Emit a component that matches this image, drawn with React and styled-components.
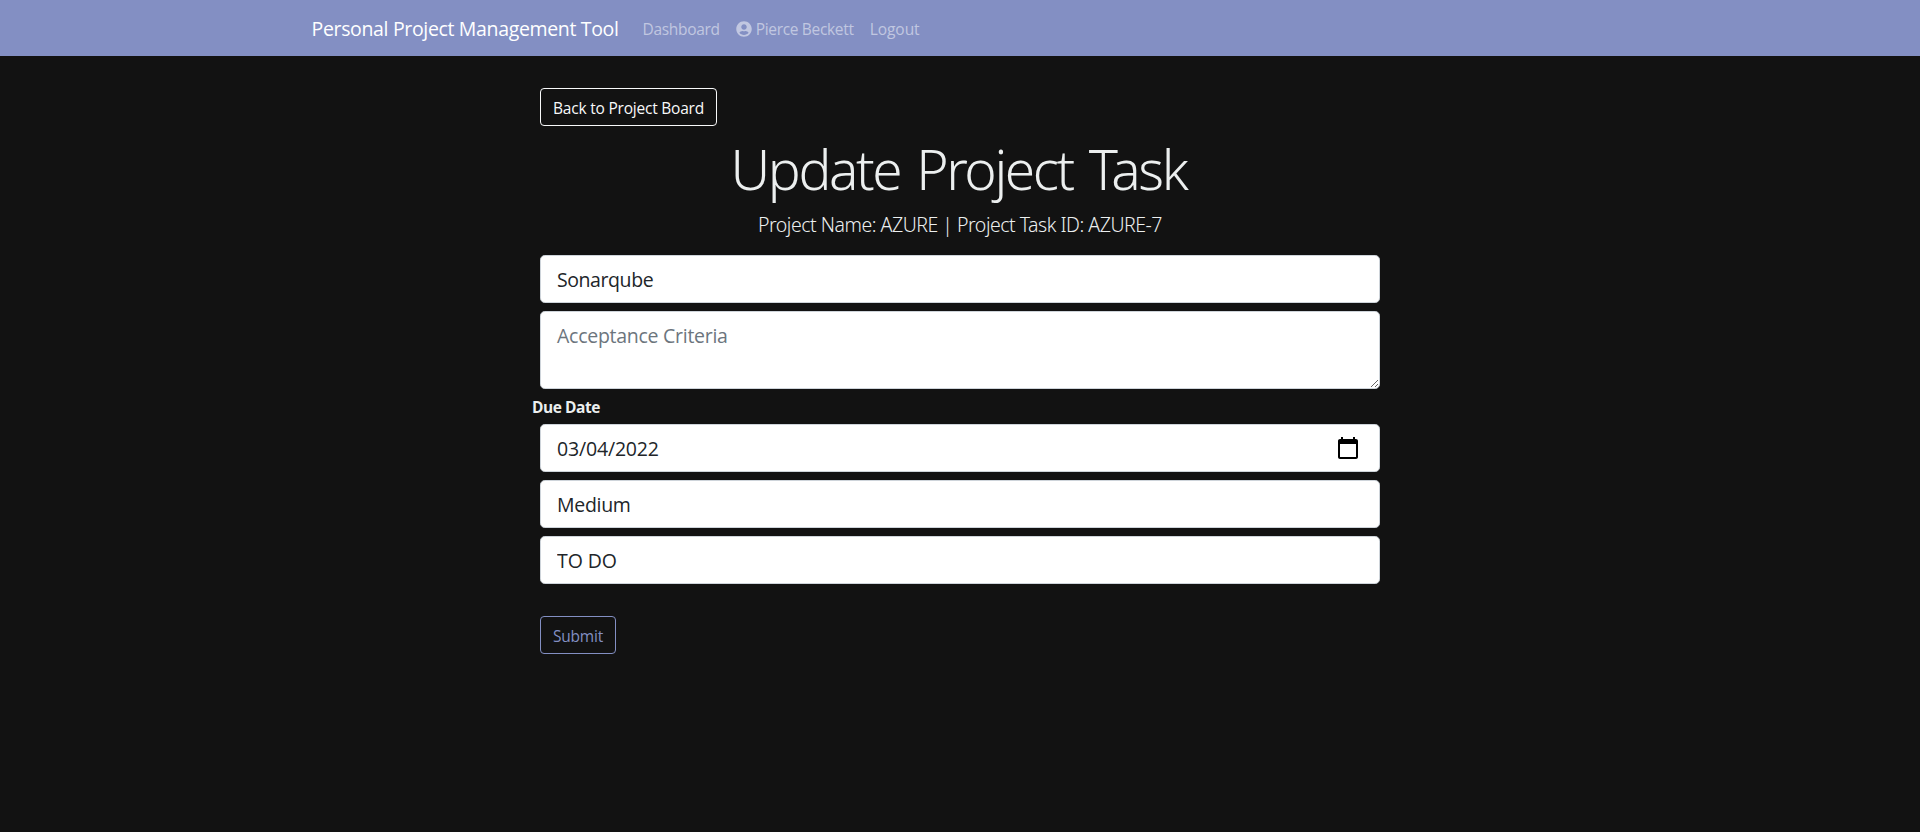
import React from "react";
import styled, { createGlobalStyle, css } from "styled-components";

const GlobalStyle = createGlobalStyle`
  *, *::before, *::after { box-sizing: border-box; }
  body {
    margin: 0;
    min-height: 100vh;
    background: #121212;
    color: #ecefef;
    font-family: "Open Sans", "Noto Sans", sans-serif;
    font-size: 15.5px;
    line-height: 24px;
    letter-spacing: -0.21px;
  }
`;

const Navbar = styled.nav`
  display: flex;
  align-items: center;
  height: 56px;
  padding-left: 311.5px;
  background: #838fc3;
`;

const Brand = styled.a`
  margin-right: 16px;
  padding-top: 2px;
  color: #fff;
  font-size: 19.5px;
  line-height: 30px;
  letter-spacing: -0.34px;
  white-space: nowrap;
`;

const NavLinks = styled.div`
  display: flex;
  align-items: center;
`;

const NavLink = styled.a`
  display: flex;
  align-items: center;
  gap: 4px;
  padding: 9px 8px 7px;
  color: rgba(255, 255, 255, 0.5);
  white-space: nowrap;
  letter-spacing: ${({ $tracking }) => $tracking || "-0.32px"};
`;

const UserGlyph = styled.svg`
  width: 16px;
  height: 16px;
  margin-bottom: 1px;
  fill: currentColor;
`;

const Main = styled.main`
  display: flex;
  flex-direction: column;
  align-items: flex-start;
  width: 840px;
  margin: 0 auto;
  padding-top: 32px;
`;

const OutlineButton = styled.button`
  height: 38px;
  padding: 1px 0 0;
  width: ${({ $width }) => $width};
  border: 1px solid ${({ $color }) => $color};
  border-radius: 4px;
  background: transparent;
  color: ${({ $color }) => $color};
  font: inherit;
  letter-spacing: inherit;
  white-space: nowrap;
`;

const Title = styled.h1`
  width: 100%;
  margin: 9px 0 8px;
  padding-right: 3px;
  font-family: "Noto Sans", sans-serif;
  font-size: 55px;
  font-weight: 300;
  line-height: 67px;
  letter-spacing: -2.4px;
  word-spacing: 4px;
  text-align: center;
`;

const Lead = styled.p`
  width: 100%;
  margin: 0 0 15px;
  font-family: "Noto Sans", sans-serif;
  font-size: 19.5px;
  font-weight: 300;
  line-height: 30px;
  letter-spacing: -0.48px;
  text-align: center;
`;

const Form = styled.form`
  display: flex;
  flex-direction: column;
  align-items: flex-start;
  width: 100%;
`;

const control = css`
  display: block;
  width: 100%;
  height: 48px;
  margin: 0 0 8px;
  padding: 9px 16px 7px;
  border: 1px solid #ced4da;
  border-radius: 4.8px;
  background: #fff;
  color: #212529;
  font-family: inherit;
  font-size: 19.5px;
  line-height: 30px;
  letter-spacing: ${({ $tracking }) => $tracking || "-0.42px"};
  outline: none;
`;

const TextInput = styled.input`
  ${control}
  padding: 8px 16px;
`;

const DateInput = styled.input`
  ${control}
  &::-webkit-datetime-edit-month-field,
  &::-webkit-datetime-edit-day-field,
  &::-webkit-datetime-edit-year-field {
    padding: 0;
  }
  &::-webkit-calendar-picker-indicator {
    width: 26px;
    height: 26px;
    margin-top: -1px;
  }
`;

const TextArea = styled.textarea`
  ${control}
  height: 78px;
  margin-bottom: 6px;
  overflow: auto;
  resize: vertical;
  &::placeholder { color: #6c757d; }
`;

const Select = styled.select`
  ${control}
  appearance: none;
`;

const Label = styled.label`
  margin: 0 0 5px -8px;
  font-size: 15.5px;
  font-weight: 700;
  letter-spacing: -0.45px;
`;

const Actions = styled.div`
  margin-top: 24px;
`;

export default function App() {
  return (
    <>
      <GlobalStyle />
      <Navbar>
        <Brand>Personal Project Management Tool</Brand>
        <NavLinks>
          <NavLink>Dashboard</NavLink>
          <NavLink>
            <UserGlyph viewBox="0 0 496 512" aria-hidden="true">
              <path d="M248 8C111 8 0 119 0 256s111 248 248 248 248-111 248-248S385 8 248 8zm0 96c48.600 0 88 39.400 88 88s-39.400 88-88 88-88-39.400-88-88 39.400-88 88-88zm0 344c-58.700 0-111.300-26.600-146.500-68.200 18.800-35.400 55.600-59.800 98.500-59.800 2.400 0 4.800.4 7.100 1.100 13 4.200 26.600 6.900 40.900 6.900 14.300 0 28-2.700 40.900-6.900 2.300-.7 4.700-1.100 7.100-1.100 42.900 0 79.700 24.400 98.500 59.800C359.300 421.400 306.700 448 248 448z" />
            </UserGlyph>
            Pierce Beckett
          </NavLink>
          <NavLink $tracking="-0.05px">Logout</NavLink>
        </NavLinks>
      </Navbar>
      <Main>
        <OutlineButton type="button" $color="#f8f9fa" $width="177px">
          Back to Project Board
        </OutlineButton>
        <Title>Update Project Task</Title>
        <Lead>Project Name: AZURE | Project Task ID: AZURE-7</Lead>
        <Form>
          <TextInput type="text" defaultValue="Sonarqube" />
          <TextArea placeholder="Acceptance Criteria" $tracking="-0.27px" />
          <Label htmlFor="due-date">Due Date</Label>
          <DateInput id="due-date" type="date" defaultValue="2022-03-04" $tracking="-0.18px" />
          <Select defaultValue="2" $tracking="-0.3px">
            <option value="1">High</option>
            <option value="2">Medium</option>
            <option value="3">Low</option>
          </Select>
          <Select defaultValue="TO_DO" $tracking="-0.1px">
            <option value="TO_DO">TO DO</option>
            <option value="IN_PROGRESS">IN PROGRESS</option>
            <option value="DONE">DONE</option>
          </Select>
          <Actions>
            <OutlineButton type="button" $color="#838fc3" $width="76px">
              Submit
            </OutlineButton>
          </Actions>
        </Form>
      </Main>
    </>
  );
}
